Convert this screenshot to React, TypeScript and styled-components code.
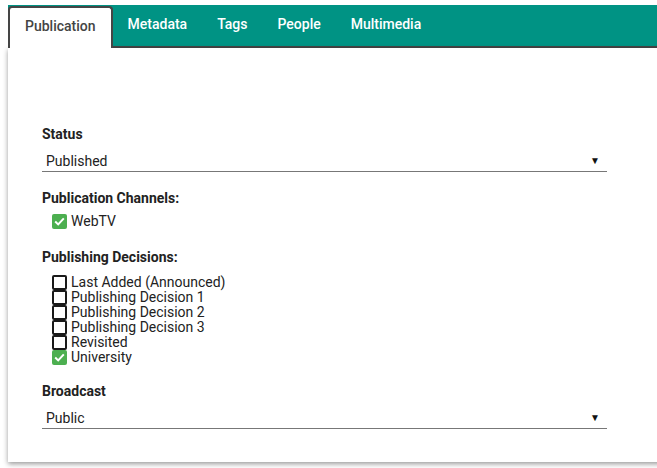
import React from "react";
import styled, { createGlobalStyle } from "styled-components";

const GlobalStyle = createGlobalStyle`
  html {
    height: 100%;
  }
  body {
    box-sizing: border-box;
    min-height: 100%;
    margin: 0;
    padding: 5px 0 0 8px;
    overflow-x: hidden;
    background: #fff;
    font-family: Roboto, "Liberation Sans", sans-serif;
    color: #222;
  }
`;

const Wrapper = styled.div`
  width: 670px;
`;

const TabBar = styled.nav`
  display: flex;
  height: 41px;
  background: #009384;
  border-bottom: 2px solid #454545;
`;

const Tab = styled.div<{ $active?: boolean }>`
  box-sizing: border-box;
  font-size: 14px;
  font-weight: 500;
  line-height: 16px;
  white-space: nowrap;
  cursor: pointer;
  ${(p) =>
    p.$active
      ? `
    margin-top: 1px;
    height: 42px;
    padding: 10px 15px 0;
    background: #fff;
    color: #444;
    border: 2px solid #454545;
    border-bottom: none;
    border-radius: 4px 4px 0 0;
    position: relative;
    z-index: 1;
  `
      : `
    padding: 11px 15px 0;
    color: #fff;
  `}
`;

const Panel = styled.section`
  box-sizing: border-box;
  height: 414px;
  background: #fff;
  box-shadow: 0 2px 5px rgba(0, 0, 0, 0.4);
  padding: 78px 0 0 34px;
`;

const Form = styled.div`
  width: 565px;
  display: flex;
  flex-direction: column;
`;

const Label = styled.div<{ $gap?: number }>`
  font-size: 14px;
  font-weight: 700;
  line-height: 16px;
  color: #222;
  margin-top: ${(p) => p.$gap ?? 0}px;
`;

const Select = styled.div`
  display: flex;
  align-items: center;
  justify-content: space-between;
  height: 21px;
  margin-top: 8px;
  padding: 0 7px 0 4px;
  border-bottom: 1px solid #777;
  font-size: 14px;
  line-height: 16px;
  color: #222;
  cursor: pointer;
`;

const Arrow = styled.span`
  font-size: 10px;
  line-height: 10px;
  color: #111;
`;

const CheckList = styled.div<{ $gap: number }>`
  display: flex;
  flex-direction: column;
  margin-top: ${(p) => p.$gap}px;
  padding-left: 10px;
`;

const CheckRow = styled.label`
  display: flex;
  align-items: center;
  gap: 4px;
  height: 15px;
  font-size: 14px;
  line-height: 15px;
  color: #222;
`;

const Box = styled.span<{ $checked?: boolean }>`
  box-sizing: border-box;
  width: 15px;
  height: 15px;
  flex: none;
  border-radius: 2px;
  display: flex;
  align-items: center;
  justify-content: center;
  ${(p) =>
    p.$checked
      ? `background: #4caf50;`
      : `background: #fff; border: 2px solid #1a1a1a;`}
`;

const CheckBox = ({ checked }: { checked?: boolean }) => (
  <Box $checked={checked}>
    {checked ? (
      <svg width="11" height="9" viewBox="0 0 11 9">
        <path
          d="M1.2 4.6 L4.2 7.4 L9.8 1.4"
          fill="none"
          stroke="#fff"
          strokeWidth="2"
        />
      </svg>
    ) : null}
  </Box>
);

const tabs = ["Publication", "Metadata", "Tags", "People", "Multimedia"];

const decisions = [
  { name: "Last Added (Announced)", checked: false },
  { name: "Publishing Decision 1", checked: false },
  { name: "Publishing Decision 2", checked: false },
  { name: "Publishing Decision 3", checked: false },
  { name: "Revisited", checked: false },
  { name: "University", checked: true },
];

export default function App() {
  return (
    <Wrapper>
      <GlobalStyle />
      <TabBar>
        {tabs.map((t, i) => (
          <Tab key={t} $active={i === 0}>
            {t}
          </Tab>
        ))}
      </TabBar>
      <Panel>
        <Form>
          <Label>Status</Label>
          <Select>
            <span>Published</span>
            <Arrow>▼</Arrow>
          </Select>

          <Label $gap={18}>Publication Channels:</Label>
          <CheckList $gap={8}>
            <CheckRow>
              <CheckBox checked />
              WebTV
            </CheckRow>
          </CheckList>

          <Label $gap={20}>Publishing Decisions:</Label>
          <CheckList $gap={10}>
            {decisions.map((d) => (
              <CheckRow key={d.name}>
                <CheckBox checked={d.checked} />
                {d.name}
              </CheckRow>
            ))}
          </CheckList>

          <Label $gap={18}>Broadcast</Label>
          <Select>
            <span>Public</span>
            <Arrow>▼</Arrow>
          </Select>
        </Form>
      </Panel>
    </Wrapper>
  );
}
